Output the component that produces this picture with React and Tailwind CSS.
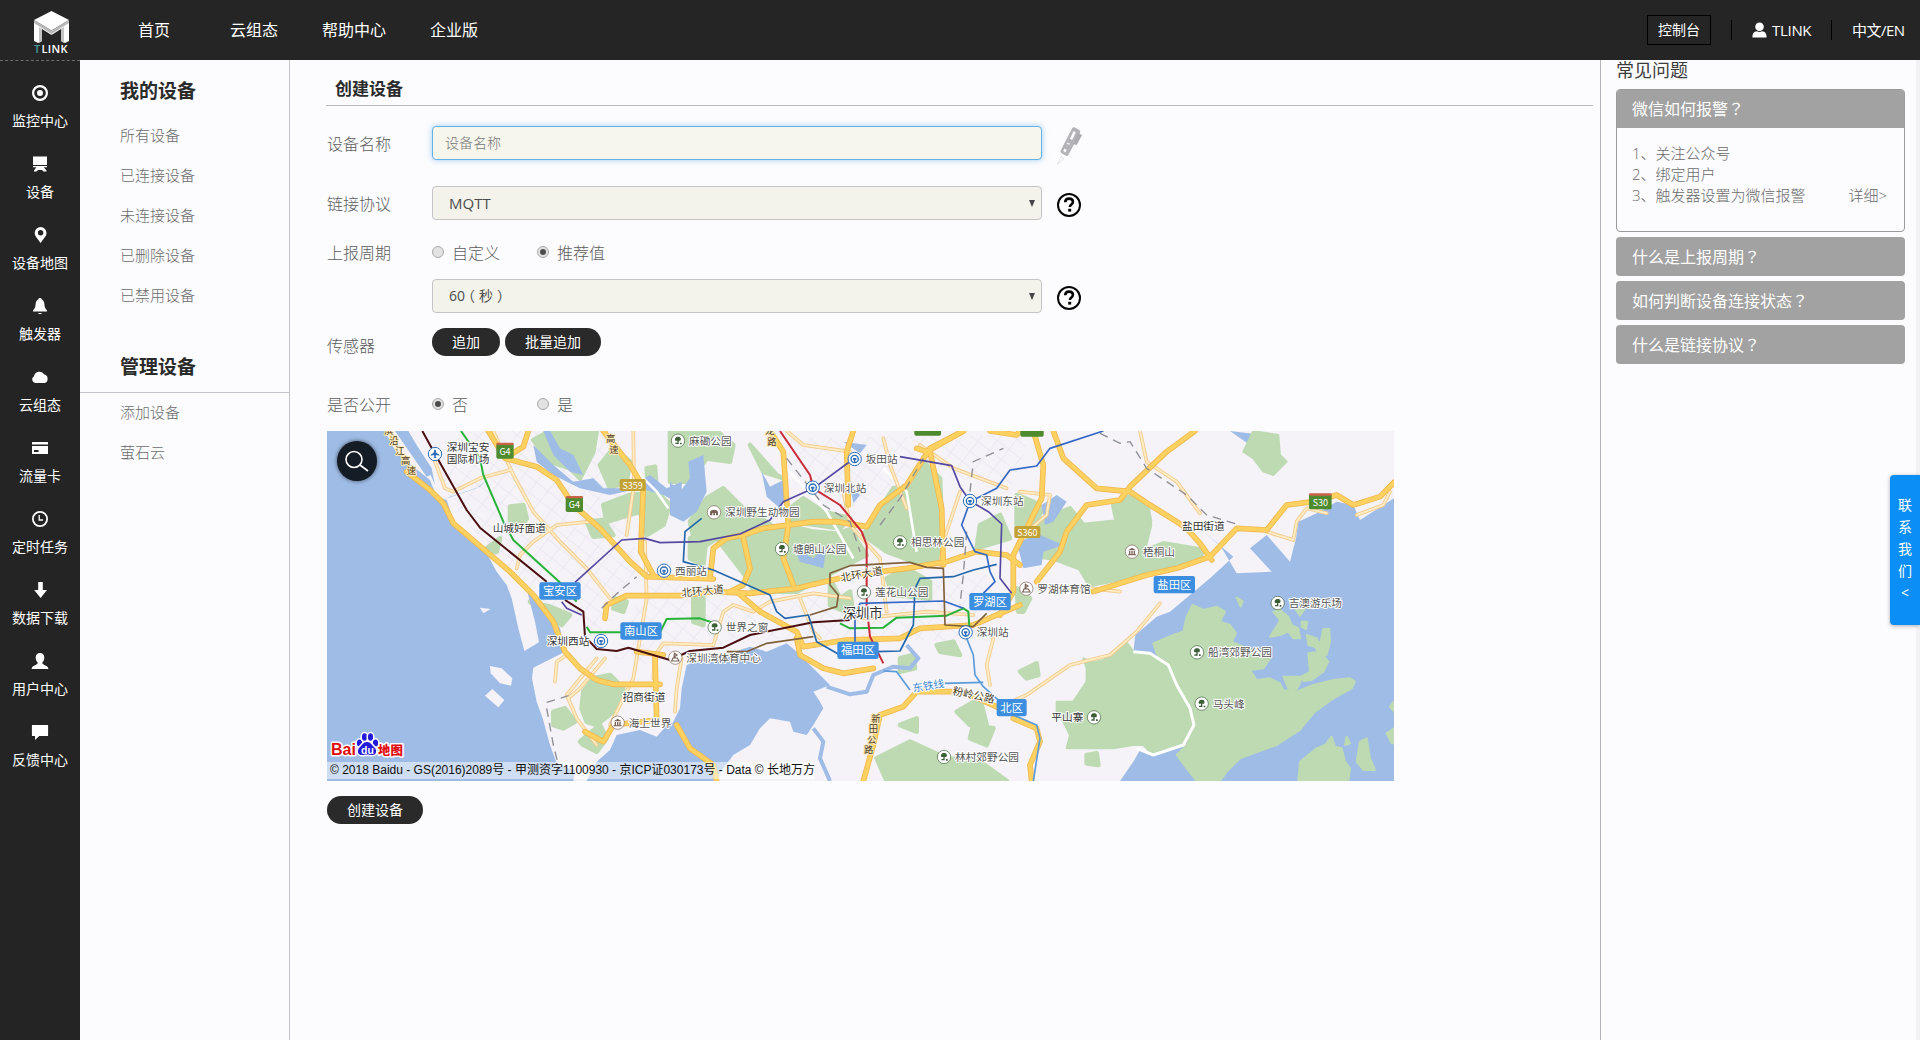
import React from "react";

/* ---------- icons ---------- */

function Glyph({ name }) {
  const shapes = {
    target: (
      <>
        <circle cx="9" cy="9" r="6.9" fill="none" stroke="#fff" strokeWidth="2.2" />
        <circle cx="9" cy="9" r="3" />
      </>
    ),
    device: <path d="M2 1.500h14v8.500H2zM2 11h14v1.300H2zM5.500 12h7l3 3.500v1H12.500L11 15H7l-1.500 1.500H3v-1z" />,
    pin: <path fillRule="evenodd" d="M9.600 1a5.900 5.900 0 0 1 5.900 5.900c0 3.400-3.400 6-5.900 10.100C7.100 12.900 3.700 10.300 3.700 6.900A5.900 5.900 0 0 1 9.600 1zm0 3a2.700 2.700 0 1 0 0 5.400 2.700 2.700 0 0 0 0-5.400z" />,
    bell: <path d="M9 1c1 0 1.400.6 1.500 1.200 2 .8 2.700 2.600 2.900 5 .2 3 .8 4 2.600 6.300v1H2v-1c1.800-2.300 2.400-3.300 2.600-6.300.2-2.400.9-4.200 2.900-5C7.600 1.600 8 1 9 1zM7 16h4l-.8 1H7.800z" />,
    cloud: <path d="M4.200 15A3.600 3.600 0 0 1 3 8.300 5.600 5.600 0 0 1 13.400 6.600 4.400 4.400 0 0 1 13.700 15z" />,
    card: <path fillRule="evenodd" d="M1.500 3h15a.5.500 0 0 1 .5.500V5.500H1v-2A.5.500 0 0 1 1.500 3zM1 7h16v7.500a.5.500 0 0 1-.5.500h-15a.5.500 0 0 1-.5-.5zM3 11v2h4.500v-2z" />,
    clock: (
      <>
        <circle cx="9" cy="9" r="7.100" fill="none" stroke="#fff" strokeWidth="1.800" />
        <path d="M8.200 5v5H12" fill="none" stroke="#fff" strokeWidth="1.300" />
      </>
    ),
    down: <path d="M7.200 1h4.600v8H16l-6.400 8L3.200 9h4z" />,
    user: <path d="M9 1c2.700 0 4.300 1.800 4.300 4.600 0 2.200-.8 4-2 5 .1 1.300.4 1.700 2 2.300C15.600 13.700 17.400 15 17.400 17H.6c0-2 1.800-3.300 4.100-4.100 1.600-.6 1.900-1 2-2.300-1.200-1-2-2.800-2-5C4.700 2.800 6.300 1 9 1z" />,
    chat: <path d="M1.500 2h15a.6.600 0 0 1 .6.600v9.800a.6.600 0 0 1-.6.600H8.300L4 17v-4H1.500a.6.600 0 0 1-.6-.6V2.600A.6.600 0 0 1 1.500 2z" />,
  };
  return (
    <svg width="18" height="18" viewBox="0 0 18 18" fill="#fff">
      {shapes[name]}
    </svg>
  );
}

function Logo() {
  return (
    <svg width="42" height="52" viewBox="0 0 42 52">
      <path d="M3 15 20.500 26 20.500 29 11 23v12l-4 2-4-2z" fill="#fdfdfd" />
      <path d="M38 15 20.500 26 20.500 29 30 23v12l4 2 4-2z" fill="#fdfdfd" />
      <path d="M20.500 5 38 14 20.500 24.500 3 14z" fill="#fff" />
      <path d="M3 14 20.500 24.500 38 14v3L20.500 28 3 17z" fill="#b9b9b9" />
      <path d="M8 21l3 2v12l-3 2zM30 23l3-2v16l-3-2z" fill="#c4c4c4" />
      <text x="3" y="46.500" fontSize="11" fontFamily="Open Sans, sans-serif" fontWeight="600" fill="#4a9c9f">T</text>
      <text x="10.500" y="46.500" fontSize="11" fontFamily="Open Sans, sans-serif" fontWeight="600" fill="#fff" textLength="26">LINK</text>
    </svg>
  );
}

function Help() {
  return (
    <svg width="26" height="26" viewBox="0 0 26 26" className="shrink-0">
      <circle cx="13" cy="13" r="11" fill="#fff" stroke="#050505" strokeWidth="2" />
      <path d="M9.200 10.200c.1-2.300 1.600-3.600 3.900-3.600 2.200 0 3.800 1.200 3.800 3.200 0 1.400-.8 2.200-1.800 2.900-.9.700-1.200 1-1.200 2.300" fill="none" stroke="#050505" strokeWidth="2.600" />
      <path d="M12.200 16.800h3v2.800h-3z" fill="#050505" />
    </svg>
  );
}

function Pen() {
  return (
    <svg width="27" height="40" viewBox="0 0 30 40" preserveAspectRatio="none" className="shrink-0">
      <path d="M17.500 3c1-1.800 2.500-2 4-1.200l4 2c1.500.8 1.800 2 1 3.600L14 28.500c-.8 1.500-2 1.900-3.500 1.100l-4-2c-1.500-.8-1.800-2-1-3.500z" fill="#b4b4b8" />
      <path d="M19.500 5 22 6.400 18 14l-2.600-1.200zM9.500 22.500 12 24l-1.500 2.500L8 25z" fill="#fbfbfd" />
      <path d="m12.500 17 2.500 1.400M24 15l-3 5" stroke="#f2f2f6" strokeWidth="1.500" />
      <path d="m24 7 5 2-6 10-4-1z" fill="#adadb1" />
      <path d="M6 30.500 1.500 38 9 33z" fill="none" stroke="#d8d8de" strokeDasharray="2 1" />
    </svg>
  );
}

/* ---------- map ---------- */

const WATER = [
  "21,18 195,18 230,85 330,165 350,215 380,225 400,285 440,330 500,385 530,440 560,480 575,520 595,610 613,678 657,652 645,590 622,500 650,520 690,570 720,610 735,680 640,728 636,760 650,830 668,880 690,960 712,1020 765,1035 760,1068 21,1068",
  "225,18 320,155 332,150 345,180 335,130 290,60 265,18",
  "800,1068 830,1010 870,975 890,930 960,915 1010,935 1050,890 1085,910 1085,1068",
  "375,222 470,190 500,165 480,185 390,215",
  "640,60 700,120 760,170 820,160 850,190 920,190 990,150 1040,190 1085,170 1085,240 1030,210 960,190 870,210 780,190 700,150 650,110",
  "690,18 720,70 760,90 790,150 750,140 700,90 670,18",
  "1050,170 1080,200 1110,160 1105,110 1150,90 1160,200 1130,260 1090,290 1050,270",
  "1100,720 1170,690 1220,688 1290,665 1340,680 1400,655 1430,680 1470,720 1530,780 1480,800 1500,830 1510,850 1480,900 1460,930 1420,920 1410,890 1350,880 1320,910 1290,960 1240,990 1180,1068 1050,1068 1050,910 1080,850 1085,790",
  "1325,140 1350,185 1390,165 1400,210 1380,250 1340,215",
  "1420,365 1480,400 1520,360 1510,430 1440,410",
  "1590,180 1620,210 1600,235",
  "1570,50 1640,60 1620,85",
  "2090,350 2160,330 2230,360 2170,380 2165,420 2110,430",
  "2165,240 2210,210 2240,230 2200,290 2175,300",
  "2730,18 2830,30 2810,90 2790,60",
  "2650,320 2700,360 2750,445 2855,440 2790,370 2840,330 2910,410 2928,340 2935,290 2990,265 3050,230 3100,240 3120,285 3222,220 3222,1068 2400,1068 2440,1010 2460,975 2500,990 2600,960 2550,900 2520,740 2440,680 2446,630 2510,575 2550,560 2610,510 2670,460 2740,395",
];

const LAND = [
  "510,723 545,730 577,760 573,782 540,775 512,745",
  "517,792 553,825 535,847 495,812",
  "480,548 512,552 490,565",
  "1320,1068 1330,1010 1370,970 1430,1010 1450,1068",
];

const GREEN = [
  "640,45 690,18 830,18 820,80 780,160 750,130 690,110",
  "840,120 880,70 930,110 920,170 870,190",
  "980,130 1005,125 1010,200 1050,240 1030,300 980,330 960,260 860,290 850,240 930,210 985,205",
  "570,245 610,240 620,280 600,310 570,290",
  "800,290 850,285 880,330 820,335",
  "500,370 540,340 530,380 510,385",
  "630,530 690,545 750,570 725,600 680,570",
  "885,520 920,530 910,560 880,550",
  "790,800 820,760 870,750 910,790 880,860 830,900 800,890 785,850",
  "700,860 735,850 765,890 730,910 700,900",
  "780,950 840,900 860,940 830,980 790,960",
  "1050,18 1190,18 1240,60 1230,110 1160,100 1110,170 1050,170",
  "1160,220 1210,190 1270,250 1340,290 1390,330 1370,430 1290,470 1190,340 1130,380 1110,290",
  "1290,60 1370,150 1390,160 1330,140",
  "1410,250 1450,220 1510,260 1590,280 1560,310 1420,290",
  "1260,330 1400,300 1480,320 1600,330 1640,390 1580,420 1430,500 1300,500 1270,420",
  "1720,190 1780,180 1810,110 1860,160 1870,400 1780,410 1700,380 1630,330",
  "1480,350 1600,310 1620,390 1520,450 1420,460",
  "1110,340 1160,330 1150,420 1110,400",
  "1530,460 1560,520 1590,500 1600,570 1530,540",
  "1120,500 1150,500 1150,600 1120,590",
  "1700,460 1760,430 1830,470 1830,520 1720,510",
  "1740,700 1780,690 1785,730 1740,740",
  "1850,660 1900,650 1920,690 1860,680",
  "1910,860 1980,820 2000,900 1950,900",
  "1960,900 2020,910 2000,960 1950,940",
  "1740,900 1790,880 1790,920",
  "1670,1000 1770,950 1880,1000 1980,1010 2060,1068 1700,1068",
  "1980,300 2040,270 2070,340 1970,370",
  "2120,300 2250,250 2290,300 2390,290 2380,240 2410,215 2470,225 2490,300 2470,380 2530,355 2650,375 2640,395 2500,440 2310,480 2280,430 2200,400 2130,390",
  "2395,240 2430,215 2480,235 2490,290 2475,330 2440,370 2390,330",
  "2090,210 2140,230 2170,250 2140,300 2090,300",
  "2100,740 2150,715 2155,750 2120,760",
  "2300,990 2330,985 2335,1020 2300,1015",
  "2090,490 2130,520 2110,560 2095,560",
];

/* peninsula and islands, drawn over the eastern bay */
const ISLANDS = [
  "2770,80 2800,18 2875,30 2880,90 2900,110 2860,150 2830,140 2800,100",
  "2290,700 2320,712 2350,705 2390,670 2420,653 2440,680 2490,685 2540,720 2570,780 2610,850 2620,900 2590,960 2500,990 2470,960 2440,960 2380,970 2340,970 2240,970 2250,930 2230,890 2210,860 2210,830 2260,830 2280,800 2300,770 2300,730",
  "2500,655 2560,630 2590,620 2600,575 2618,540 2650,555 2690,545 2715,560 2700,590 2730,600 2748,625 2735,650 2780,670 2820,690 2850,700 2830,730 2790,735 2810,765 2850,760 2880,775 2890,795 2930,800 2980,780 3040,765 3090,760 3105,770 3095,790 3040,820 2985,860 2955,895 2940,915 2870,960 2800,985 2760,1000 2720,1040 2700,1068 2630,1068 2600,1030 2570,990 2600,960 2622,900 2610,850 2570,780 2540,720 2510,685",
  "2850,635 2870,605 2880,585 2860,560 2880,555 2905,575 2915,600 2935,610 2940,640 2920,640 2905,620 2880,630",
  "2960,630 2990,640 3000,660 3010,612 3028,612 3030,650 3020,690 3000,690 2985,665 2965,660",
  "2965,685 3000,680 3025,710 3010,740 2975,765 2950,768 2945,755 2970,740",
  "2890,755 2945,755 2940,775 2925,800 2905,790",
  "2925,550 2955,550 2940,572",
  "2945,590 2962,590 2958,612 2945,605",
  "2750,518 2768,528 2762,545",
  "2940,1010 2990,970 3015,960 3035,935 3045,965 3065,970 3075,1010 3090,1030 3085,1068 2935,1068",
  "3120,950 3140,940 3150,1000 3165,1035 3130,1035 3110,1010",
  "3080,935 3090,955 3075,960",
  "3222,830 3210,845 3222,860",
  "3222,910 3200,925 3215,955 3222,955",
];

const MINOR = [
  "345,110 375,190 400,200 480,160 570,135",
  "520,18 580,150 640,260 720,350 800,430 870,520",
  "590,430 600,390 640,350 710,300 810,290",
  "940,18 942,180 920,330",
  "975,350 980,520 940,760 870,900",
  "705,770 710,710 740,690 M830,700 740,810 770,880 830,960",
  "855,700 780,790 745,820",
  "1000,760 1005,690 1030,655 1180,660",
  "1180,660 1210,560 1240,540 1300,560 1350,530 1480,505 1590,520",
  "1400,18 1450,60 1590,80",
  "1570,200 1590,300 1680,400 1700,560",
  "1690,40 1710,120 1760,250",
  "1800,60 1900,130 2060,190",
  "1920,200 1870,350 1860,420",
  "1630,580 1820,560 1960,570",
  "2020,640 2000,720 2010,780",
  "1085,700 1070,790 1065,860",
  "2100,200 2190,210 2180,270 2110,330",
  "2460,18 2480,110 2570,170 2640,265",
  "2050,840 2120,810 2250,720 2370,690 2450,620 2520,535",
  "2220,500 2310,490 2400,500",
  "2840,320 2920,345 2930,290 2960,250 3020,265",
  "3110,270 3190,240 3210,200",
  "1440,520 1480,620 1500,640",
];

const MAJOR = [
  "260,140 330,195 370,235 400,295 470,355 570,440 640,510 700,590 735,680 780,730 830,765 880,778 1020,778",
  "505,18 555,100 650,125 710,165 760,240 840,310 930,410 980,455 1180,462",
  "625,18 610,65 570,90",
  "850,18 930,120 970,185 962,380 1000,450",
  "855,580 860,540 920,512 1080,512 1180,500 1290,505 1430,490 1600,450 1760,430 1880,410 1970,380 2060,390 2100,420",
  "1170,460 1180,370 1220,340 1270,330 1330,310 1480,290 1550,290 1640,305 1680,240 1760,180 1830,70 1930,18",
  "1350,18 1390,80 1405,300 1390,400 1420,480",
  "1600,18 1580,80 1585,240",
  "1830,80 1865,250 1870,420",
  "1930,18 1820,80 1790,70",
  "1250,500 1320,560 1430,620 1450,665 1580,645 1740,640 1800,610 1960,600 2100,540",
  "1430,640 1440,690 1510,730 1570,745 1660,730",
  "1270,340 1290,430 1270,480 1230,500",
  "2010,18 2090,30 2100,18",
  "2140,18 2170,120 2165,220 2110,330 2080,390 2080,500 2040,570",
  "2200,18 2230,100 2330,190 2430,200 2490,240 2570,290 2600,310 2640,355 2675,405",
  "2625,18 2540,80 2430,185 2400,225 2300,240 2240,320 2220,380 2150,470",
  "2320,500 2480,450 2570,430 2670,395 2750,310 2840,315 2900,240 2980,230 3050,210 3100,240 3180,215 3222,172",
  "1630,1068 1660,960 1680,870 1750,845 1790,800 1930,800 2040,850",
  "1070,900 1110,970 1180,1020 1190,1068",
  "2080,880 2150,910 2160,950 2130,1020 2135,1068",
  "1030,690 950,680",
  "795,920 850,950 880,900 1010,885 1005,690",
];

const RAIL = [
  ["#4b0f12", "307,18 345,87 440,255 480,308 680,470 M735,525 790,560 795,635 830,672 890,678 925,668 1050,705 1110,678 1210,668 1290,630 1480,592 1590,585", 6],
  ["#27b339", "423,18 480,100 490,150 550,290 580,345 715,468 770,530 M800,605 810,622 1020,622 1040,582 1140,580 1200,600 M1560,595 1590,610 1690,608 1730,578 1880,572 1930,550 1945,560 1948,605", 6],
  ["#5448a0", "765,472 905,345 975,340 1020,353 1140,350 1260,327 1350,285 1390,230 1480,190 1600,102 M1740,95 1895,122 1920,185 1950,228 2005,260 2045,297 2040,460 2075,505 M725,530 740,550 785,570", 5],
  ["#c92b37", "1380,18 1470,150 1480,190 1560,240 1625,320 1640,360 1640,560 M1645,590 1650,635 1690,715", 6],
  ["#2467ad", "1145,280 1095,320 1090,410 1180,435 1350,510 1370,560 1395,580 1465,570 1490,650 1560,690 M1670,680 1740,678 1780,600 1785,490 1800,460 1900,455 1960,435 2030,418", 5],
  ["#3468c4", "1605,650 1605,570 1620,535 1870,528 1930,550 M1950,230 1925,300 1965,380 2000,390 2010,440 2025,470 1990,505 M1950,230 2030,190 2070,135 2150,123 2190,70 2350,18", 5],
  ["#80613b", "1470,570 1550,545 1555,510 1530,480 1530,445 1590,422 1770,412 1820,427 1870,430 1875,600 1960,605 2000,565 M1480,635 1340,655 1280,680 1220,680", 5],
  ["#5b9bd9", "1940,640 1960,690 1965,750 1990,785 2040,830 M1990,772 1870,775 1840,785 M1690,738 1730,740 1770,795 M2080,870 2150,900 2160,940 2140,1068", 5],
];

const DISTRICTS = [
  [720, 498, "宝安区"],
  [963, 618, "南山区"],
  [1614, 676, "福田区"],
  [2010, 530, "罗湖区"],
  [2563, 479, "盐田区"],
  [2075, 848, "北区"],
];

const SHIELDS = [
  [555, 79, 52, "G4", "#4e8b2f"],
  [763, 239, 52, "G4", "#4e8b2f"],
  [938, 180, 78, "S359", "#c3a235"],
  [2122, 321, 78, "S360", "#c3a235"],
  [3001, 231, 68, "S30", "#4e8b2f"],
  [1823, 10, 80, "", "#4e8b2f"],
  [2136, 13, 70, "", "#4e8b2f"],
];

/* x, y, label, kind; labels start 33 units right of the marker */
const PLACES = [
  [1074, 47, "麻磡公园", "park"],
  [1182, 262, "深圳野生动物园", "zoo"],
  [1386, 372, "塘朗山公园", "park"],
  [1740, 352, "相思林公园", "park"],
  [1632, 502, "莲花山公园", "park"],
  [1184, 607, "世界之窗", "park"],
  [1066, 698, "深圳湾体育中心", "sport"],
  [1604, 102, "坂田站", "rail"],
  [1478, 188, "深圳北站", "rail"],
  [1950, 228, "深圳东站", "rail"],
  [1937, 622, "深圳站", "rail"],
  [1032, 437, "西丽站", "rail"],
  [893, 893, "海上世界", "site"],
  [2436, 380, "梧桐山", "site"],
  [2119, 491, "罗湖体育馆", "sport"],
  [2873, 534, "吉澳游乐场", "park"],
  [2631, 682, "船湾郊野公园", "park"],
  [2645, 836, "马头峰", "park"],
  [1872, 996, "林村郊野公园", "park"],
];

const LABELS = [
  [380, 79, "深圳宝安", 32],
  [380, 114, "国际机场", 32],
  [518, 322, "山城好面道", 32],
  [680, 659, "深圳西站", 32],
  [908, 829, "招商街道", 32],
  [1568, 578, "深圳市", 40],
  [2586, 315, "盐田街道", 32],
  [2194, 888, "平山寨", 32],
];

const ROTATED = [
  [1085, 515, "北环大道", -5],
  [1564, 470, "北环大道", -10],
  [1780, 802, "东铁线", -10, "#3c86cf"],
  [1896, 808, "粉岭公路", 12],
];

const VERTICAL = [
  [[206, 28, "滨"], [222, 57, "沿"], [240, 87, "江"], [257, 117, "高"], [274, 147, "速"]],
  [[872, 52, "高"], [882, 84, "速"]],
  [[1350, 27, "龙"], [1356, 60, "路"]],
  [[1668, 890, "新"], [1660, 921, "田"], [1656, 953, "公"], [1646, 985, "路"]],
];

function Marker({ x, y, kind }) {
  const rail = kind === "rail" || kind === "air";
  const c = rail ? "#2f6db8" : kind === "park" ? "#3d5f38" : "#7b6257";
  return (
    <g transform={`translate(${x} ${y})`}>
      <circle r="20" fill="#fff" stroke={c} strokeWidth={rail ? 3 : 2} />
      {kind === "rail" && (
        <>
          <circle r="11" fill="none" stroke={c} strokeWidth="4" />
          <path d="M-5-3H5V3H2V12H-2V3H-5z" fill={c} />
        </>
      )}
      {kind === "park" && <path d="M0-12C8-12 11-6 7 0H2V6H-2V0H-8C-11-6-7-12 0-12zM-8 6H2V10H-8zM6 6h5v5H6z" fill={c} />}
      {kind === "site" && <path d="M0-12 12-4H-12zM-9-2h4V8h-4zM-2-2h4V8h-4zM5-2h4V8H5zM-12 8h24v3h-24z" fill={c} />}
      {kind === "sport" && <path d="M-3-13 5-8-1-4V1H6L11 10H-11L-7 1H-4z" fill="none" stroke={c} strokeWidth="3.500" />}
      {kind === "zoo" && <path d="M-12 9V-1C-9-10 9-10 12-1V9H6V2H3V9H-2V2H-5V9z" fill={c} />}
      {kind === "air" && <path d="M-2-13H2L4-4 13 2V5L3 3 2 9 5 12H-5L-2 9-3 3-13 5V2L-4-4z" fill={c} />}
    </g>
  );
}

const asPath = (s) => s.split(" M").map((p) => "M" + p.replace(/^M/, "")).join(" ");

function CityMap() {
  const halo = { paintOrder: "stroke", stroke: "#fff", strokeWidth: 6, strokeLinejoin: "round" };
  return (
    <svg className="block h-full w-full" viewBox="21 18 3201 1050" preserveAspectRatio="none" fontFamily="'Noto Sans CJK SC', sans-serif" fontSize="32">
      <defs>
        <pattern id="blocks" width="44" height="38" patternUnits="userSpaceOnUse" patternTransform="rotate(38)">
          <path d="M0 0H44M0 0V38" stroke="#e3e2ec" strokeWidth="3" />
        </pattern>
      </defs>
      <rect x="21" y="18" width="3201" height="1050" fill="#f5f3f8" />
      <path d="M330 60 500 18H850L960 420 850 640 640 510 400 250z" fill="url(#blocks)" />
      <path d="M980 460 1500 510 2000 450 2050 650 1500 640 1430 640 1090 660 1000 720 880 700z" fill="url(#blocks)" />
      <path d="M1400 40 2130 30 2070 200 1850 140 1590 250 1480 220z" fill="url(#blocks)" />
      {GREEN.map((p) => <polygon key={p} points={p} fill="#bddab2" stroke="#bddab2" strokeWidth="14" strokeLinejoin="round" />)}
      {WATER.map((p) => <polygon key={p} points={p} fill="#9fbce6" />)}
      {ISLANDS.map((p) => <polygon key={p} points={p} fill="#bddab2" stroke="#bddab2" strokeWidth="6" strokeLinejoin="round" />)}
      {LAND.map((p) => <polygon key={p} points={p} fill="#f5f3f8" />)}
      <path d="M1520 785 1590 808 1640 800 1660 750 1720 725 1770 730 1795 700 1760 660 M1480 910 1510 950 1500 1000 1530 1068" fill="none" stroke="#9fbce6" strokeWidth="12" strokeLinejoin="round" />
      <path d="M2440 680 2490 685 2545 720 2570 780 2610 850 2622 900 2590 960 2500 990 2450 970" fill="none" stroke="#fff" strokeWidth="9" strokeLinejoin="round" />
      <path d="M1690 130 1760 200 1790 380 M1400 130 1520 260 1600 400 M880 70 1010 200 1045 250" fill="none" stroke="#fff" strokeWidth="8" />

      <g fill="none" strokeLinejoin="round" strokeLinecap="round">
        {MINOR.map((p) => <path key={p} d={asPath(p)} stroke="#f3c98a" strokeWidth="11" />)}
        {MINOR.map((p) => <path key={p} d={asPath(p)} stroke="#fdebc2" strokeWidth="6" />)}
        {MAJOR.map((p) => <path key={p} d={asPath(p)} stroke="#f0b850" strokeWidth="17" />)}
        {MAJOR.map((p) => <path key={p} d={asPath(p)} stroke="#fdd160" strokeWidth="12" />)}
      </g>
      <g fill="none" stroke="#8d8d94" strokeWidth="4" strokeDasharray="26 18">
        <path d="M680 832 745 812M680 850 700 960 715 1020M845 550 880 515 950 455M1400 100 1510 240 1590 290 1620 380M1680 300 1740 220 1810 100M1950 200 1960 110 2050 70M2340 25 2400 55 2430 50 2480 130 2600 210 2660 270 2760 300M1940 320 1930 450 1920 540" />
      </g>
      <g fill="none" strokeLinejoin="round">
        {RAIL.map(([c, p, w]) => <path key={p} d={asPath(p)} stroke={c} strokeWidth={w} />)}
      </g>

      {SHIELDS.map(([x, y, w, t, c]) => (
        <g key={x}>
          <rect x={x - w / 2} y={y - (w === 78 ? 18 : 24)} width={w} height={w === 78 ? 36 : 46} rx="5" fill={c} />
          {w !== 78 && <rect x={x - w / 2} y={y - 26} width={w} height="7" rx="3" fill="#c96449" />}
          {t && <text x={x} y={y + 11} textAnchor="middle" fontSize="27" fill="#fff">{t}</text>}
        </g>
      ))}

      {PLACES.map(([x, y, t, kind]) => (
        <g key={t}>
          <Marker x={x} y={y} kind={kind} />
          <text x={x + 33} y={y + 12} fill="#555" style={halo}>{t}</text>
        </g>
      ))}
      <Marker x={345} y={87} kind="air" />
      <Marker x={843} y={648} kind="rail" />
      <Marker x={2322} y={877} kind="park" />
      {LABELS.map(([x, y, t, s]) => <text key={t} x={x} y={y} fontSize={s} fill="#333" style={halo}>{t}</text>)}
      {ROTATED.map(([x, y, t, r, c]) => (
        <text key={x} x={x} y={y} fill={c || "#4a3b22"} style={halo} transform={`rotate(${r} ${x} ${y})`}>{t}</text>
      ))}
      {VERTICAL.flat().map(([x, y, t]) => (
        <text key={`${x}-${y}`} x={x} y={y} fontSize="28" textAnchor="middle" fill="#4a3b22" style={{ ...halo, stroke: "#ffe9b8" }}>{t}</text>
      ))}
      {DISTRICTS.map(([x, y, t]) => {
        const w = t.length * 34 + 22;
        return (
          <g key={t}>
            <rect x={x - w / 2} y={y - 26} width={w} height="52" rx="7" fill="#3b8ee0" />
            <text x={x} y={y + 12} textAnchor="middle" fontSize="34" fill="#fff">{t}</text>
          </g>
        );
      })}
    </svg>
  );
}

function BaiduMark() {
  return (
    <svg width="76" height="30" viewBox="0 0 76 30" fontFamily="'Liberation Sans', 'Noto Sans CJK SC', sans-serif" fontWeight="bold">
      <g style={{ paintOrder: "stroke", stroke: "#fff", strokeWidth: 3, strokeLinejoin: "round" }}>
        <text x="2" y="25" fontSize="17" fill="#e00d0d" textLength="25" lengthAdjust="spacingAndGlyphs">Bai</text>
        <text x="49" y="24.500" fontSize="12.500" fontWeight="900" fill="#e00d0d" textLength="25">地图</text>
        <g fill="#2319dc">
          <ellipse cx="30.500" cy="13" rx="2.600" ry="3.500" />
          <ellipse cx="35.500" cy="7" rx="2.600" ry="3.800" />
          <ellipse cx="41.500" cy="7" rx="2.600" ry="3.800" />
          <ellipse cx="46.500" cy="13" rx="2.600" ry="3.500" />
          <path d="M38 12c4 0 5 3.500 7.500 5.500 2.500 2.300 2.300 7.500-2 7.500-2.500 0-3.500-.6-5.500-.6s-3 .6-5.500.6c-4.300 0-4.500-5.200-2-7.500C33 15.500 34 12 38 12z" />
        </g>
      </g>
      <text x="32" y="23.500" fontSize="10.500" fill="#fff">du</text>
    </svg>
  );
}

/* ---------- page parts ---------- */

const SIDE = [
  ["target", "监控中心"],
  ["device", "设备"],
  ["pin", "设备地图"],
  ["bell", "触发器"],
  ["cloud", "云组态"],
  ["card", "流量卡"],
  ["clock", "定时任务"],
  ["down", "数据下载"],
  ["user", "用户中心"],
  ["chat", "反馈中心"],
];

function Header() {
  return (
    <header className="flex h-[60px] shrink-0 items-center bg-[#252525] text-white">
      <div className="flex h-full w-20 items-start pl-[31px] pt-[6px]">
        <Logo />
      </div>
      <nav className="flex items-center pl-[58px] text-base">
        <a className="w-[92px]">首页</a>
        <a className="w-[92px]">云组态</a>
        <a className="w-[108px]">帮助中心</a>
        <a>企业版</a>
      </nav>
      <div className="ml-auto flex items-center pr-[15px] text-[15px]">
        <span className="flex h-[30px] w-16 items-center justify-center border border-black text-sm">控制台</span>
        <span className="ml-5 h-5 w-px bg-black" />
        <span className="ml-5 flex items-center gap-[5px]">
          <svg width="15" height="16" viewBox="0 0 15 16" fill="#fff">
            <circle cx="7.500" cy="4.800" r="4.300" />
            <path d="M.5 15.500C.2 11.500 2 9.600 5 9.300c1.600 1 3.400 1 5 0 3 .3 4.800 2.200 4.500 6.200z" />
          </svg>
          <span className="w-10 tracking-[-0.3px]">TLINK</span>
        </span>
        <span className="ml-[19px] h-5 w-px bg-black" />
        <span className="ml-5 w-[53px] whitespace-nowrap tracking-[-0.5px]">中文/EN</span>
      </div>
    </header>
  );
}

function Sidebar() {
  return (
    <aside className="w-20 shrink-0 border-t border-dashed border-[#6b6b6b] bg-[#242424] pt-[23px] text-white">
      {SIDE.map(([icon, label]) => (
        <div key={label} className="flex h-[71px] flex-col items-center">
          <Glyph name={icon} />
          <span className="mt-[9px] text-sm leading-5">{label}</span>
        </div>
      ))}
    </aside>
  );
}

function DeviceNav() {
  const item = "flex h-10 items-center pl-10 text-[15px] font-light text-[#6b6b6b]";
  const title = "flex items-center pl-10 text-[19px] font-bold text-[#2b2b2b]";
  return (
    <section className="w-[210px] shrink-0 border-r border-[#c4c4cc] pt-3">
      <h2 className={`${title} h-[38px]`}>我的设备</h2>
      <div className="pt-[5px]">
        {["所有设备", "已连接设备", "未连接设备", "已删除设备", "已禁用设备"].map((t) => (
          <a key={t} className={item}>{t}</a>
        ))}
      </div>
      <h2 className={`${title} mt-[28px] h-[50px] border-b border-[#c4c4cc]`}>管理设备</h2>
      <div className="-mt-px">
        <a className={item}>添加设备</a>
        <a className={item}>萤石云</a>
      </div>
    </section>
  );
}

function Row({ label, className, children }) {
  return (
    <div className={`flex items-start ${className}`}>
      <div className="w-[105px] shrink-0 text-base font-light leading-6 text-[#5c5c5c]">{label}</div>
      {children}
    </div>
  );
}

function Select({ className, children }) {
  return (
    <div className={`flex h-[34px] w-[610px] items-center justify-between rounded border border-[#c4c4c8] bg-[#f3f3eb] pl-4 pr-[6px] text-[#4c4c4c] ${className}`}>
      <span>{children}</span>
      <svg width="6" height="7" viewBox="0 0 6 7" fill="#444"><path d="M0 0h6L3 7z" /></svg>
    </div>
  );
}

function Radio({ on, label }) {
  return (
    <label className="flex w-[105px] items-center pt-px text-[16px] font-light leading-6 text-[#5c5c5c]">
      <span className="mt-[-3px] flex size-3 items-center justify-center rounded-full border border-[#a8a8a8] bg-[#e2e2e2]">
        {on && <span className="size-[6px] rounded-full bg-[#4c4c4c]" />}
      </span>
      <span className="ml-2">{label}</span>
    </label>
  );
}

function Pill({ className, children }) {
  return (
    <button className={`flex h-7 items-center justify-center rounded-full bg-[#2a2a2a] text-sm text-white ${className}`}>
      {children}
    </button>
  );
}

function CreateForm() {
  return (
    <main className="w-[1311px] shrink-0 border-r border-[#b4b4bc] pl-9">
      <h1 className="mr-[7px] flex h-[46px] items-end border-b border-[#b9b9bd] pb-1 pl-[9px] text-[17px] font-bold leading-6 text-[#2b2b2b]">创建设备</h1>
      <div className="pl-px">
        <Row label={<div className="pt-[6px]">设备名称</div>} className="h-[60px] pt-5">
          <div className="flex h-[34px] w-[610px] items-center rounded border border-[#66afe9] bg-[#f6f6ed] pl-3 text-sm font-light text-[#777] shadow-[0_0_6px_rgba(102,175,233,0.6)]">
            设备名称
          </div>
          <div className="ml-[14px]"><Pen /></div>
        </Row>
        <Row label={<div className="pt-[6px]">链接协议</div>} className="h-[54px] pt-5">
          <Select className="text-[15px]">MQTT</Select>
          <div className="ml-[14px] pt-[6px]"><Help /></div>
        </Row>
        <Row label={<div className="pt-px">上报周期</div>} className="h-[59px] pt-5">
          <Radio label="自定义" />
          <Radio on label="推荐值" />
        </Row>
        <Row label="" className="h-[34px]">
          <Select className="text-sm">
            60<span className="inline-block -translate-x-1">（</span>秒<span className="inline-block translate-x-1">）</span>
          </Select>
          <div className="ml-[14px] pt-[6px]"><Help /></div>
        </Row>
        <Row label={<div className="pt-[6px]">传感器</div>} className="h-[79px] pt-[15px]">
          <Pill className="w-[68px]">追加</Pill>
          <Pill className="ml-[5px] w-24">批量追加</Pill>
        </Row>
        <Row label={<div className="pt-px">是否公开</div>} className="h-[39px]">
          <Radio on label="否" />
          <Radio label="是" />
        </Row>
        <div className="relative h-[350px] w-[1067px] overflow-hidden">
          <CityMap />
          <span className="absolute left-[10px] top-[10px] flex size-10 items-center justify-center rounded-full bg-[#141c26] shadow-[0_0_4px_rgba(0,0,0,0.6)]">
            <svg width="26" height="22" viewBox="0 0 26 22" fill="none" stroke="#fff" strokeWidth="1.600">
              <circle cx="10" cy="9.500" r="8" />
              <path d="m16 15 8 6" />
            </svg>
          </span>
          <div className="absolute left-[2px] top-[299px]"><BaiduMark /></div>
          <div className="absolute bottom-[2px] left-0 h-[17px] whitespace-nowrap bg-white/50 pl-[3px] font-['Liberation_Sans','Noto_Sans_CJK_SC',sans-serif] text-[12px] leading-[17px] text-[#111]">
            © 2018 Baidu - GS(2016)2089号 - 甲测资字1100930 - 京ICP证030173号 - Data © 长地万方
          </div>
        </div>
        <Pill className="mt-[15px] w-24">创建设备</Pill>
      </div>
    </main>
  );
}

function Question({ children }) {
  return (
    <span>
      {children}
      <span className="font-['Noto_Sans_CJK_TC',sans-serif]" lang="zh-TW">？</span>
    </span>
  );
}

function Faq() {
  const bar = "flex h-[39px] items-center bg-[#a2a2a2] pl-4 text-base leading-6 text-white";
  return (
    <section className="w-[304px] pl-[15px]">
      <h3 className="h-[29px] text-[18px] leading-5 text-[#3c3c3c]">常见问题</h3>
      <div className="flex flex-col gap-[5px]">
        <div className="h-[143px] overflow-hidden rounded border border-[#9a9a9a]">
          <div className="-mx-px -mt-px">
            <div className={bar}><Question>微信如何报警</Question></div>
          </div>
          <div className="flex items-end pl-[15px] pr-[17px] pt-[15px] text-[15px] font-light leading-[21px] text-[#6b6b6b]">
            <ol>
              <li>1、关注公众号</li>
              <li>2、绑定用户</li>
              <li>3、触发器设置为微信报警</li>
            </ol>
            <a className="ml-auto">详细&gt;</a>
          </div>
        </div>
        {["什么是上报周期", "如何判断设备连接状态", "什么是链接协议"].map((t) => (
          <div key={t} className={`${bar} rounded`}><Question>{t}</Question></div>
        ))}
      </div>
    </section>
  );
}

export default function App() {
  return (
    <div className="relative flex h-[1040px] w-[1920px] flex-col overflow-hidden bg-[#fcfcfe] font-['Open_Sans','Noto_Sans_CJK_SC',sans-serif]">
      <Header />
      <div className="flex min-h-0 flex-1">
        <Sidebar />
        <DeviceNav />
        <CreateForm />
        <Faq />
        <div className="ml-auto w-1 bg-[#f3f3f5]" />
      </div>
      <div className="absolute right-0 top-[475px] flex h-[150px] w-[30px] flex-col items-center rounded-l-sm bg-[#0b8ef5] pt-[19px] text-sm leading-[22px] text-white shadow-[0_1px_4px_rgba(0,0,0,0.3)]">
        {["联", "系", "我", "们", "<"].map((c) => (
          <span key={c}>{c}</span>
        ))}
      </div>
    </div>
  );
}
